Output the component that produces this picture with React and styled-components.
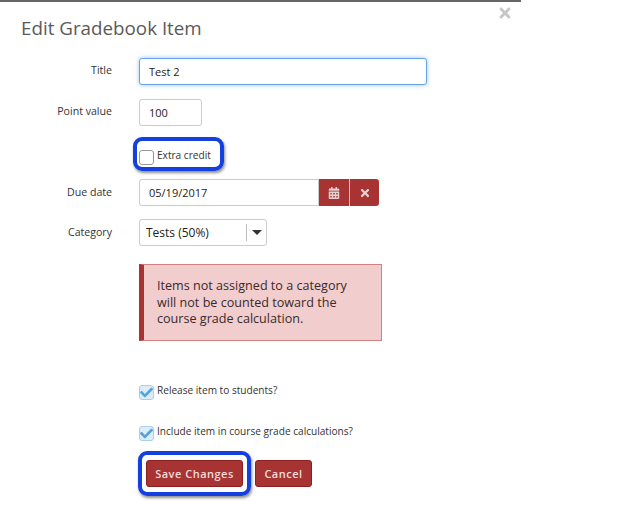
import React from 'react';
import styled, { createGlobalStyle } from 'styled-components';
import { FaTimes, FaCalendarAlt, FaCheck } from 'react-icons/fa';

const Global = createGlobalStyle`
  html, body { margin: 0; padding: 0; background: #fff; }
  body { font-family: "Open Sans", "Liberation Sans", sans-serif; color: #222; }
`;

const Modal = styled.div`
  position: relative;
  width: 521px;
  height: 523px;
  box-sizing: border-box;
  border-top: 2px solid #666;
  padding: 14px 0 0 21px;
`;

const Close = styled.div`
  position: absolute;
  top: 3px;
  right: 8px;
  color: #c6c6c6;
  font-size: 16px;
  line-height: 16px;
`;

const Heading = styled.h1`
  margin: -1px 0 17px;
  font-size: 18.8px;
  line-height: 26px;
  font-weight: 500;
  color: #5a5a5a;
`;

const Row = styled.div`
  display: grid;
  grid-template-columns: 91px auto;
  column-gap: 27px;
  align-items: center;
  justify-items: start;
  margin-top: ${p => p.$top || 0}px;
`;

const Label = styled.label`
  justify-self: end;
  font-size: 10.6px;
  line-height: 16px;
  color: #333;
  padding-bottom: ${p => p.$lift}px;
`;

const Input = styled.div`
  box-sizing: border-box;
  width: ${p => p.$width}px;
  height: 27px;
  padding-left: 9px;
  display: flex;
  align-items: center;
  font-size: 11px;
  color: #222;
  background: #fff;
  border: 1px solid ${p => (p.$focus ? '#66a6e8' : '#ccc')};
  border-radius: ${p => (p.$attached ? '3px 0 0 3px' : '3px')};
  box-shadow: ${p => (p.$focus ? '0 0 4px rgba(102,166,232,.7)' : 'none')};
`;

const Group = styled.div`
  display: flex;
`;

const AddonButton = styled.div`
  box-sizing: border-box;
  width: 30px;
  height: 27px;
  display: flex;
  align-items: center;
  justify-content: center;
  background: #a83333;
  color: #e6d0d0;
  font-size: 12px;
  border-left: ${p => (p.$divided ? '1px solid #ccc' : 'none')};
  border-radius: ${p => (p.$end ? '0 3px 3px 0' : '0')};
`;

const Select = styled.div`
  box-sizing: border-box;
  width: 128px;
  height: 27px;
  display: flex;
  align-items: center;
  padding-left: 6px;
  font-size: 12px;
  border: 1px solid #ccc;
  border-radius: 3px;
`;

const SelectText = styled.span`
  flex: 1;
`;

const Caret = styled.span`
  width: 19px;
  height: 17px;
  border-left: 1px solid #bbb;
  display: flex;
  align-items: center;
  justify-content: center;
  &::after {
    content: '';
    border-left: 5px solid transparent;
    border-right: 5px solid transparent;
    border-top: 5px solid #333;
  }
`;

const CheckRow = styled.div`
  display: flex;
  align-items: flex-start;
  gap: 3px;
  margin: ${p => p.$top}px 0 0 118px;
  font-size: 10.1px;
  line-height: 14px;
  color: #333;
`;

const CheckText = styled.span`
  margin-top: 3px;
`;

const Box = styled.span`
  box-sizing: border-box;
  width: 15px;
  height: 15px;
  margin-top: 5px;
  border-radius: 3px;
  border: 1px solid ${p => (p.$on ? '#a8d0ee' : '#999')};
  background: ${p => (p.$on ? '#dcecf8' : '#fff')};
  color: #55a3dd;
  display: flex;
  align-items: center;
  justify-content: center;
  font-size: 13px;
  flex: none;
`;

const Alert = styled.div`
  box-sizing: border-box;
  width: 243px;
  height: 77px;
  margin: 18px 0 0 118px;
  padding: 13px 20px 0 13px;
  background: #f2cdcd;
  border: 1px solid #d57f7f;
  border-left: 5px solid #a83333;
  font-size: 12.6px;
  line-height: 16.5px;
  color: #3a2a2a;
`;

const Actions = styled.div`
  display: flex;
  gap: 12px;
  margin: 19px 0 0 125px;
`;

const Button = styled.button`
  box-sizing: border-box;
  height: 27px;
  width: ${p => p.$width}px;
  padding: 0;
  font-family: inherit;
  font-size: 11px;
  font-weight: 600;
  letter-spacing: .5px;
  color: #f1dcdc;
  background: #a83333;
  border: 1px solid #8e1f1f;
  border-radius: 3px;
`;

const Highlight = styled.div`
  position: absolute;
  left: ${p => p.$x}px;
  top: ${p => p.$y}px;
  width: ${p => p.$w}px;
  height: ${p => p.$h}px;
  box-sizing: border-box;
  border: 4px solid #1540e0;
  border-radius: 9px;
  box-shadow: 1px 2px 3px rgba(0,0,0,.45);
  pointer-events: none;
`;

export default function App() {
  return (
    <>
      <Global />
      <Modal>
        <Close><FaTimes /></Close>
        <Heading>Edit Gradebook Item</Heading>
        <Row>
          <Label $lift={4}>Title</Label>
          <Input $width={288} $focus>Test 2</Input>
        </Row>
        <Row $top={14}>
          <Label $lift={4}>Point value</Label>
          <Input $width={63}>100</Input>
        </Row>
        <CheckRow $top={19}>
          <Box />
          <CheckText>Extra credit</CheckText>
        </CheckRow>
        <Row $top={14}>
          <Label $lift={2}>Due date</Label>
          <Group>
            <Input $width={180} $attached>05/19/2017</Input>
            <AddonButton><FaCalendarAlt /></AddonButton>
            <AddonButton $divided $end><FaTimes /></AddonButton>
          </Group>
        </Row>
        <Row $top={13}>
          <Label $lift={2}>Category</Label>
          <Select>
            <SelectText>Tests (50%)</SelectText>
            <Caret />
          </Select>
        </Row>
        <Alert>
          Items not assigned to a category will not be counted toward the course grade calculation.
        </Alert>
        <CheckRow $top={39}>
          <Box $on><FaCheck /></Box>
          <CheckText>Release item to students?</CheckText>
        </CheckRow>
        <CheckRow $top={21}>
          <Box $on><FaCheck /></Box>
          <CheckText>Include item in course grade calculations?</CheckText>
        </CheckRow>
        <Actions>
          <Button $width={97}>Save Changes</Button>
          <Button $width={57}>Cancel</Button>
        </Actions>
        <Highlight $x={133} $y={135} $w={91} $h={34} />
        <Highlight $x={138} $y={449} $w={113} $h={45} />
      </Modal>
    </>
  );
}
